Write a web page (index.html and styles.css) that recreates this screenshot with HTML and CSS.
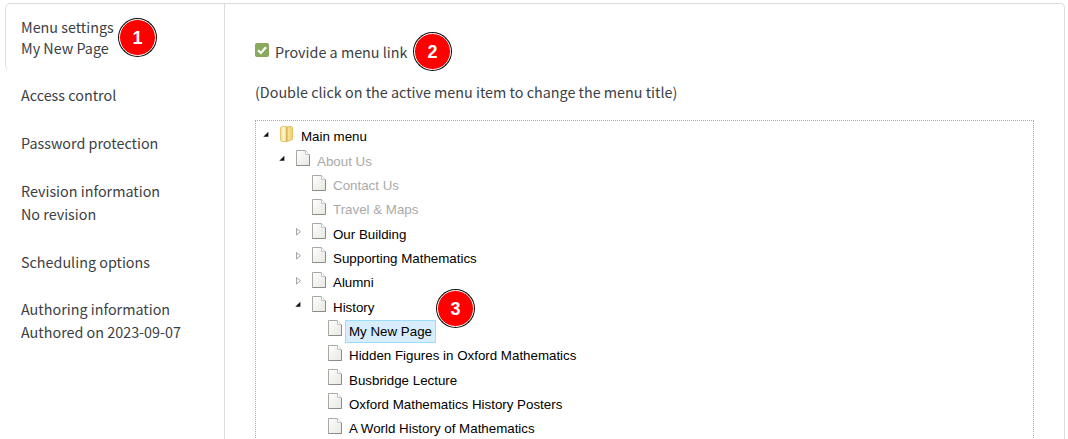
FILE: index.html
```html
<!DOCTYPE html>
<html lang="en">
<head>
<meta charset="utf-8">
<title>Menu settings</title>
<link rel="stylesheet" href="styles.css">
</head>
<body>
<svg class="defs" width="0" height="0" aria-hidden="true">
  <defs>
    <linearGradient id="paper" x1="0" y1="0" x2="1" y2="1">
      <stop offset="0" stop-color="#ffffff"/>
      <stop offset="1" stop-color="#e6e8e2"/>
    </linearGradient>
    <linearGradient id="fold" x1="0" y1="0" x2="1" y2="0">
      <stop offset="0" stop-color="#f0d488"/>
      <stop offset=".5" stop-color="#fff7cf"/>
      <stop offset="1" stop-color="#f3da8c"/>
    </linearGradient>
    <linearGradient id="foldb" x1="0" y1="0" x2="1" y2="0">
      <stop offset="0" stop-color="#fdeca2"/>
      <stop offset="1" stop-color="#eecb6a"/>
    </linearGradient>
    <symbol id="doc" viewBox="0 0 14 16">
      <path d="M.5.5H9.5L13.5 4.5V15.5H.5Z" fill="url(#paper)" stroke="#a8a8a4"/>
      <path d="M9.5.5V4.5H13.5" fill="#fff" stroke="#c4c4c0"/>
      <path d="M.5 15.5H13.5V5" fill="none" stroke="#8c8c88"/>
    </symbol>
    <symbol id="folder" viewBox="0 0 14 16">
      <path d="M.5 2.5Q.5.5 2.5.5H6.5V15.5H2.5Q.5 15.5.5 13.5Z" fill="url(#fold)" stroke="#e6c56c"/>
      <path d="M7 1 11 .5Q12.5.5 12.5 2.5V12.5Q12.5 14 11 14L7 15.5Z" fill="url(#foldb)" stroke="#e3c060"/>
      <path d="M6.8 1V15.5" stroke="#c9a550" stroke-width=".8"/>
    </symbol>
    <symbol id="open" viewBox="0 0 8 8">
      <path d="M5.4.7V5.7H.3Z" fill="#111"/>
    </symbol>
    <symbol id="closed" viewBox="0 0 8 8">
      <path d="M1.5.5 5.5 3.7 1.5 7Z" fill="#fff" stroke="#a4a4a4"/>
    </symbol>
  </defs>
</svg>
<div class="panel">
  <nav class="tabs">
    <div class="tab tab-active">Menu settings<br>My New Page</div>
    <div class="tab">Access control</div>
    <div class="tab">Password protection</div>
    <div class="tab">Revision information<br>No revision</div>
    <div class="tab">Scheduling options</div>
    <div class="tab">Authoring information<br>Authored on 2023-09-07</div>
  </nav>
  <main class="content">
    <label class="check-row">
      <span class="checkbox"><svg viewBox="0 0 14 14" width="14" height="14"><path d="M3 7.2 5.9 10 11 4.2" fill="none" stroke="#fff" stroke-width="2.2"/></svg></span>
      Provide a menu link
    </label>
    <p class="hint">(Double click on the active menu item to change the menu title)</p>
    <ul class="tree">
      <li class="row lv0"><svg class="exp"><use href="#open"/></svg><svg class="ico"><use href="#folder"/></svg><span class="title">Main menu</span></li>
      <li class="row lv1 off"><svg class="exp"><use href="#open"/></svg><svg class="ico"><use href="#doc"/></svg><span class="title">About Us</span></li>
      <li class="row lv2 off"><span class="exp"></span><svg class="ico"><use href="#doc"/></svg><span class="title">Contact Us</span></li>
      <li class="row lv2 off"><span class="exp"></span><svg class="ico"><use href="#doc"/></svg><span class="title">Travel &amp; Maps</span></li>
      <li class="row lv2"><svg class="exp"><use href="#closed"/></svg><svg class="ico"><use href="#doc"/></svg><span class="title">Our Building</span></li>
      <li class="row lv2"><svg class="exp"><use href="#closed"/></svg><svg class="ico"><use href="#doc"/></svg><span class="title">Supporting Mathematics</span></li>
      <li class="row lv2"><svg class="exp"><use href="#closed"/></svg><svg class="ico"><use href="#doc"/></svg><span class="title">Alumni</span></li>
      <li class="row lv2"><svg class="exp"><use href="#open"/></svg><svg class="ico"><use href="#doc"/></svg><span class="title">History</span></li>
      <li class="row lv3"><span class="exp"></span><svg class="ico"><use href="#doc"/></svg><span class="title selected">My New Page</span></li>
      <li class="row lv3"><span class="exp"></span><svg class="ico"><use href="#doc"/></svg><span class="title">Hidden Figures in Oxford Mathematics</span></li>
      <li class="row lv3"><span class="exp"></span><svg class="ico"><use href="#doc"/></svg><span class="title">Busbridge Lecture</span></li>
      <li class="row lv3"><span class="exp"></span><svg class="ico"><use href="#doc"/></svg><span class="title">Oxford Mathematics History Posters</span></li>
      <li class="row lv3"><span class="exp"></span><svg class="ico"><use href="#doc"/></svg><span class="title">A World History of Mathematics</span></li>
    </ul>
  </main>
</div>
<span class="badge badge-1">1</span>
<span class="badge badge-2">2</span>
<span class="badge badge-3">3</span>
</body>
</html>
```
FILE: styles.css
```css
* { box-sizing: border-box; }
html, body { margin: 0; height: 439px; overflow: hidden; background: #fff; }
body {
  position: relative;
  padding: 3px 3px 0 5px;
  font-family: "Noto Sans CJK SC", "Noto Sans", sans-serif;
  font-size: 14.35px;
  line-height: 23px;
  color: #3b4045;
}
.defs { position: absolute; }
.panel {
  display: flex;
  height: 436px;
  overflow: hidden;
  border-top: 1px solid #dcdcdc;
  border-right: 1px solid #dcdcdc;
  border-radius: 5px 5px 0 0;
}
.tabs { width: 220px; flex: none; border-right: 1px solid #dcdcdc; }
.tab { padding: 11px 16px 13.75px; }
.tab-active {
  height: 66px;
  padding: 12px 16px 0 15px;
  line-height: 21px;
  border-left: 1px solid #dcdcdc;
  border-radius: 5px 0 0 5px;
  margin-bottom: 2.25px;
}
.content { flex: 1; padding: 36px 30px 0 30px; min-width: 0; }
.check-row { display: flex; align-items: center; gap: 6px; height: 23px; }
.checkbox {
  width: 14px; height: 14px; background: #8aa85e; border-radius: 2px;
  display: block; margin-top: -3px;
}
.checkbox svg { display: block; }
.hint { margin: 17px 0 17px; }
.tree {
  list-style: none;
  margin: 0;
  padding: 3.7px 0 0;
  height: 400px;
  border: 1px dotted #a8a8a8;
  font-family: "Liberation Sans", Arial, sans-serif;
  font-size: 13.33px;
  line-height: 17px;
  color: #000;
}
.row { display: flex; align-items: center; height: 24.33px; white-space: nowrap; }
.lv0 { padding-left: 7px; }
.lv1 { padding-left: 23px; }
.lv2 { padding-left: 39px; }
.lv3 { padding-left: 55px; }
.exp { width: 8px; height: 8px; flex: none; margin-top: -4px; }
.ico { width: 14px; height: 16px; flex: none; margin: -6px 0 0 9px; }
.title { margin-left: 3px; padding: 2px 3px; border: 1px solid transparent; }
.off .title { color: #aaa; }
.selected { background: #d7edfb; border-color: #99defd; }
.badge {
  position: absolute;
  width: 37px; height: 37px;
  display: flex; align-items: center; justify-content: center;
  border-radius: 50%;
  background: #f00;
  border: 1.5px solid #fff;
  box-shadow: 0 0 0 1px #111;
  color: #fff;
  font: bold 18px/1 "Liberation Sans", Arial, sans-serif;
}
.badge-1 { left: 119px; top: 19px; }
.badge-2 { left: 414px; top: 33px; }
.badge-3 { left: 437px; top: 290px; }
```
